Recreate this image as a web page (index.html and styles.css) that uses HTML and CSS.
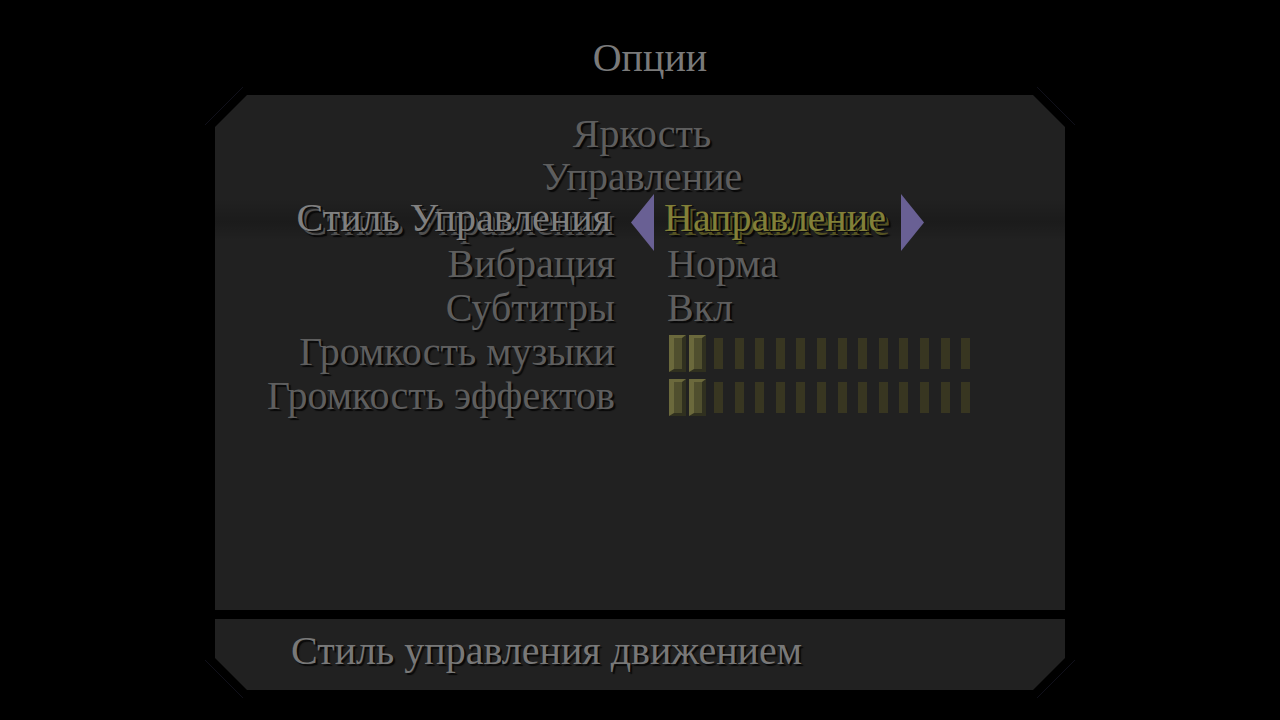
FILE: index.html
```html
<!DOCTYPE html>
<html lang="ru">
<head>
	<meta charset="utf-8">
	<meta name="viewport" content="width=device-width, initial-scale=1">
	<title>Опции</title>
	<link rel="stylesheet" href="styles.css">
</head>
<body>
<main class="screen">
	<h1 class="title">Опции</h1>

	<div class="frame">
		<svg class="edge edge_tl" viewBox="0 0 38 38" aria-hidden="true"><path d="M0 38 38 0"/></svg>
		<svg class="edge edge_tr" viewBox="0 0 38 38" aria-hidden="true"><path d="M0 0 38 38"/></svg>
		<svg class="edge edge_bl" viewBox="0 0 38 38" aria-hidden="true"><path d="M0 0 38 38"/></svg>
		<svg class="edge edge_br" viewBox="0 0 38 38" aria-hidden="true"><path d="M0 38 38 0"/></svg>

		<section class="panel">
			<button type="button" class="item">Яркость</button>
			<button type="button" class="item">Управление</button>

			<div class="row row_active">
				<span class="label" id="styleLabel">Стиль Управления</span>
				<div class="value picker" role="group" aria-labelledby="styleLabel">
					<button type="button" class="arrow" aria-label="Назад"><svg viewBox="0 0 23 57" aria-hidden="true"><path d="M23 0V57L0 28.5z"/></svg></button>
					<output class="picked">Направление</output>
					<button type="button" class="arrow" aria-label="Вперёд"><svg viewBox="0 0 23 57" aria-hidden="true"><path d="M0 0V57L23 28.5z"/></svg></button>
				</div>
			</div>

			<div class="row">
				<span class="label" id="vibroLabel">Вибрация</span>
				<div class="value"><button type="button" class="toggle" id="vibro" aria-labelledby="vibroLabel vibro">Норма</button></div>
			</div>

			<div class="row">
				<span class="label" id="subsLabel">Субтитры</span>
				<div class="value"><button type="button" class="toggle" id="subs" aria-labelledby="subsLabel subs">Вкл</button></div>
			</div>

			<div class="row">
				<label class="label" for="music">Громкость музыки</label>
				<div class="value">
					<div class="volume">
						<i class="on"></i><i class="on"></i><i></i><i></i><i></i><i></i><i></i><i></i><i></i><i></i><i></i><i></i><i></i><i></i><i></i>
						<input type="range" id="music" min="0" max="15" value="2">
					</div>
				</div>
			</div>

			<div class="row">
				<label class="label" for="effects">Громкость эффектов</label>
				<div class="value">
					<div class="volume">
						<i class="on"></i><i class="on"></i><i></i><i></i><i></i><i></i><i></i><i></i><i></i><i></i><i></i><i></i><i></i><i></i><i></i>
						<input type="range" id="effects" min="0" max="15" value="2">
					</div>
				</div>
			</div>
		</section>

		<p class="hint">Стиль управления движением</p>
	</div>
</main>
<script src="options.js"></script>
</body>
</html>
```

FILE: styles.css
```css
*{box-sizing: border-box;}
body{margin: 0;background: #000;color: #5e5e5e;font: 40px/43px "Liberation Serif", "Times New Roman", serif;}
button{padding: 0;border: 0;background: none;color: inherit;font: inherit;text-shadow: inherit;cursor: pointer;}
.screen{display: flex;flex-direction: column;min-height: 100vh;max-width: 850px;margin: 0 auto;padding: 36px 0 30px;}
.title{margin: 0 0 16px;padding-left: 20px;font-size: 40px;font-weight: normal;text-align: center;color: #7a7a7a;}

.frame{position: relative;display: flex;flex-direction: column;flex: 1;gap: 9px;}
.panel{flex: 1;display: flex;flex-direction: column;padding: 17px 0;background: #212121;text-shadow: 2px 2px 1px #080808;clip-path: polygon(32px 0, calc(100% - 32px) 0, 100% 32px, 100% 100%, 0 100%, 0 32px);}
.hint{margin: 0;padding: 10px 76px 18px;background: #212121;color: #787878;text-shadow: 2px 2px 1px #080808;clip-path: polygon(0 0, 100% 0, 100% calc(100% - 32px), calc(100% - 32px) 100%, 32px 100%, 0 calc(100% - 32px));}

/* thin lines outside the cut corners */
.edge{position: absolute;width: 38px;height: 38px;fill: none;stroke: #10101a;}
.edge_tl{left: -10px;top: -8px;}
.edge_tr{right: -10px;top: -8px;}
.edge_bl{left: -10px;bottom: -8px;}
.edge_br{right: -10px;bottom: -8px;}

.item{padding-left: 4px;height: 43px;}
.row{display: grid;grid-template-columns: 400px 1fr;gap: 16px;height: 43px;margin-top: 1px;}
.label{text-align: right;white-space: nowrap;}
.value{padding-left: 36px;}

/* selected row: bright text over its own dim copy */
.row_active{margin-top: 0;background: linear-gradient(transparent, rgba(0,0,0,.18) 56%, transparent);color: #808080;line-height: 39px;text-shadow: 2px 1px 0 #0c0c0c, 4px 4px 0 #505050, 6px 6px 1px #080808;}
.row_active .label{padding-right: 4px;}
.picker{display: flex;align-items: flex-start;gap: 10px;padding-left: 0;}
.picked{padding-right: 5px;color: #828038;text-shadow: 2px 1px 0 #0c0c0c, 4px 4px 0 #545223, 6px 6px 1px #080808;}
.arrow{width: 23px;height: 57px;margin: -4px 0 -10px;}
.arrow svg{display: block;width: 23px;height: 57px;fill: #696094;}

.volume{position: relative;display: grid;grid-template-columns: repeat(15, 1fr);place-items: center;width: 309px;height: 43px;padding-top: 4px;}
.volume i{width: 9px;height: 31px;background: #383621;}
.volume .on{width: 17px;height: 37px;border: 3px solid;border-color: #6b693c #30301f #30301f #6b693c;border-left-width: 5px;border-right-width: 4px;background: #504f2e;}
.volume input{position: absolute;top: 0;left: 0;width: 100%;height: 100%;margin: 0;opacity: 0;cursor: pointer;}
```

FILE: options.js
```js
// light as many bars as the slider value
document.querySelectorAll(".volume").forEach(function (box) {
	var input = box.querySelector("input");
	var bars = box.querySelectorAll("i");
	input.addEventListener("input", function () {
		bars.forEach(function (bar, i) {
			bar.classList.toggle("on", i < Number(input.value));
		});
	});
});
```
